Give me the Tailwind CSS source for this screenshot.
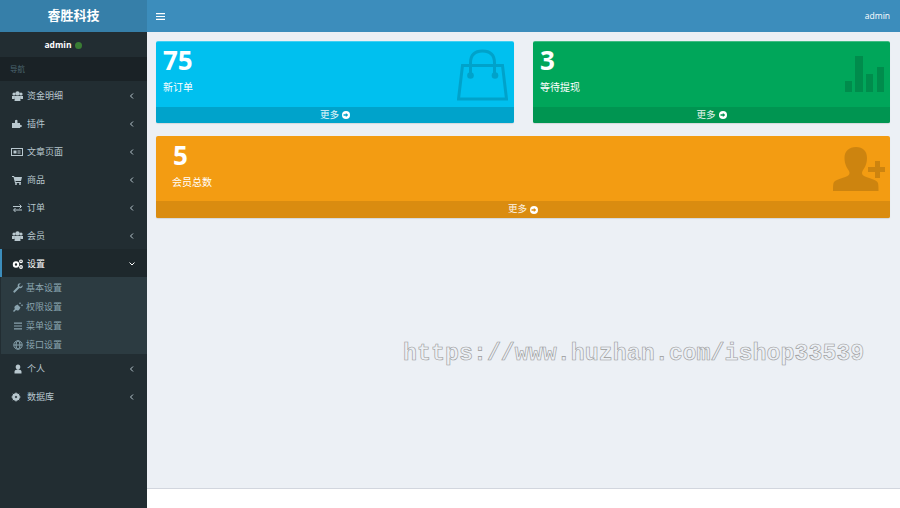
<!DOCTYPE html>
<html lang="zh">
<head>
<meta charset="utf-8">
<script src="https://cdn.jsdelivr.net/npm/@tailwindcss/browser@4"></script>
<title>admin</title>
</head>
<body class="h-[508px] w-[900px] overflow-hidden bg-white font-['Open_Sans','Noto_Sans_CJK_SC',sans-serif]">
<div class="flex h-[508px] w-[900px]">
  <aside class="flex w-[147px] shrink-0 flex-col bg-[#222d32]">
    <div class="flex h-8 items-center justify-center bg-[#367fa9] text-[13px] font-bold text-white">睿胜科技</div>
    <div class="flex h-[25px] items-center justify-center gap-[3px] pt-[2px] pr-[21px] text-[8.5px] font-bold text-white">
      <span>admin</span><span class="size-[7px] rounded-full bg-[#3a7d34]"></span>
    </div>
    <div class="flex h-6 items-center bg-[#1a2226] pl-[10px] pt-[2px] text-[7.5px] text-[#4b646f]">导航</div>
    <nav class="text-[9px] text-[#b8c7ce]">
      <div class="flex h-7 items-center pl-3 pr-[12px] pt-[2px]">
        <svg class="w-[11px] h-[10px] mr-1" viewBox="0 0 11 10" fill="currentColor"><circle cx="2" cy="3" r="1.6"/><circle cx="9" cy="3" r="1.6"/><circle cx="5.5" cy="2.4" r="2.2"/><path d="M0 5h3l-.5 3H0zM11 5H8l.5 3H11zM3 5h5l.5 5h-6z"/></svg>
        <span class="flex-1">资金明细</span>
        <svg class="size-[6px]" viewBox="0 0 6 6" fill="none" stroke="currentColor" stroke-width="1"><path d="M4 .5 1.500 3 4 5.500"/></svg>
      </div>
      <div class="flex h-7 items-center pl-3 pr-[12px] pt-[2px]">
        <svg class="w-[11px] h-[10px] mr-1" viewBox="0 0 11 10" fill="currentColor"><path d="M0 4h3V2.500a1.300 1.300 0 1 1 2.500 0V4H8v2a1.200 1.200 0 1 1 0 2v1H0z"/></svg>
        <span class="flex-1">插件</span>
        <svg class="size-[6px]" viewBox="0 0 6 6" fill="none" stroke="currentColor" stroke-width="1"><path d="M4 .5 1.500 3 4 5.500"/></svg>
      </div>
      <div class="flex h-7 items-center pl-[11px] pr-[12px] pt-[2px]">
        <svg class="w-[12px] h-[10px] mr-1" viewBox="0 0 12 10"><rect x=".5" y="1.500" width="11" height="7" fill="none" stroke="currentColor"/><rect x="2.500" y="3.500" width="3" height="3" fill="currentColor"/><path d="M6.500 4h3M6.500 6h3" stroke="currentColor"/></svg>
        <span class="flex-1">文章页面</span>
        <svg class="size-[6px]" viewBox="0 0 6 6" fill="none" stroke="currentColor" stroke-width="1"><path d="M4 .5 1.500 3 4 5.500"/></svg>
      </div>
      <div class="flex h-7 items-center pl-[12px] pr-[12px] pt-[2px]">
        <svg class="w-[11px] h-[10px] mr-1" viewBox="0 0 11 10" fill="currentColor"><path d="M0 1h2l.5 1H10L9 6H3.500l.2 1H9v1H3L1.500 2H0z"/><circle cx="4" cy="9" r="1"/><circle cx="8" cy="9" r="1"/></svg>
        <span class="flex-1">商品</span>
        <svg class="size-[6px]" viewBox="0 0 6 6" fill="none" stroke="currentColor" stroke-width="1"><path d="M4 .5 1.500 3 4 5.500"/></svg>
      </div>
      <div class="flex h-7 items-center pl-[12px] pr-[12px] pt-[2px]">
        <svg class="w-[11px] h-[10px] mr-1" viewBox="0 0 11 10" fill="none" stroke="currentColor"><path d="M1 3.500h8M7.500 1.500l2 2-2 2M10 7H2M3.500 5l-2 2 2 2"/></svg>
        <span class="flex-1">订单</span>
        <svg class="size-[6px]" viewBox="0 0 6 6" fill="none" stroke="currentColor" stroke-width="1"><path d="M4 .5 1.500 3 4 5.500"/></svg>
      </div>
      <div class="flex h-7 items-center pl-3 pr-[12px] pt-[2px]">
        <svg class="w-[11px] h-[10px] mr-1" viewBox="0 0 11 10" fill="currentColor"><circle cx="2" cy="3" r="1.6"/><circle cx="9" cy="3" r="1.6"/><circle cx="5.5" cy="2.4" r="2.2"/><path d="M0 5h3l-.5 3H0zM11 5H8l.5 3H11zM3 5h5l.5 5h-6z"/></svg>
        <span class="flex-1">会员</span>
        <svg class="size-[6px]" viewBox="0 0 6 6" fill="none" stroke="currentColor" stroke-width="1"><path d="M4 .5 1.500 3 4 5.500"/></svg>
      </div>
      <div class="flex h-7 items-center border-l-2 border-[#3c8dbc] bg-[#1e282c] pl-[10px] pr-[12px] pt-[2px] text-white">
        <svg class="w-[11px] h-[10px] mr-1" viewBox="0 0 11 10" fill="none" stroke="currentColor"><circle cx="4" cy="5.500" r="2.200" stroke-width="2"/><circle cx="9" cy="2.300" r="1.300" stroke-width="1.200"/><circle cx="9" cy="8" r="1.300" stroke-width="1.200"/></svg>
        <span class="flex-1">设置</span>
        <svg class="size-[6px]" viewBox="0 0 6 6" fill="none" stroke="currentColor" stroke-width="1"><path d="M.5 1.500 3 4l2.500-2.500"/></svg>
      </div>
      <div class="ml-px h-[77px] bg-[#2c3b41] text-[#8aa4af]">
        <div class="flex h-[19px] items-center pl-3 pt-[2px]">
          <svg class="size-[10px] mr-[3px]" viewBox="0 0 10 10" fill="currentColor"><path d="M9.500 2.200 7.800 3.800 6.400 3.500 6.100 2.100 7.800.5C6.300 0 4.700.9 4.700 2.500c0 .4 0 .7.200 1L.5 8a1 1 0 0 0 1.400 1.400L6.400 5c1.800.8 3.900-.9 3.100-2.800z"/></svg>
          <span>基本设置</span>
        </div>
        <div class="flex h-[19px] items-center pl-3 pt-[2px]">
          <svg class="size-[10px] mr-[3px]" viewBox="0 0 10 10" fill="currentColor"><path d="M4.500 2.500 7.500 5.500 6 8c-1 .8-2.200.7-3 .1L1 10 0 9l1.900-2c-.6-.8-.7-2 .1-3zM6 1.300 7 .3l1 1-1 1zM8 3.300l1-1 1 1-1 1z"/></svg>
          <span>权限设置</span>
        </div>
        <div class="flex h-[19px] items-center pl-3 pt-[2px]">
          <svg class="size-[10px] mr-[3px]" viewBox="0 0 10 10" fill="currentColor"><path d="M1 1.500h8v1.200H1zM1 4.400h8v1.200H1zM1 7.300h8v1.200H1z"/></svg>
          <span>菜单设置</span>
        </div>
        <div class="flex h-[19px] items-center pl-3 pt-[2px]">
          <svg class="size-[10px] mr-[3px]" viewBox="0 0 10 10" fill="none" stroke="currentColor"><circle cx="5" cy="5" r="4.200"/><ellipse cx="5" cy="5" rx="2" ry="4.200"/><path d="M1 5h8"/></svg>
          <span>接口设置</span>
        </div>
      </div>
      <div class="flex h-7 items-center pl-[13px] pr-[12px] pt-[2px]">
        <svg class="w-[10px] h-[10px] mr-1" viewBox="0 0 10 10" fill="currentColor"><path d="M5 .5c1.500 0 2.300 1 2.300 2.500S6.500 5.500 5 5.500 2.700 4.500 2.700 3 3.500.5 5 .5zM1.500 9.500V7.500C1.500 6.200 3 5.500 5 5.500s3.500.7 3.500 2v2z"/></svg>
        <span class="flex-1">个人</span>
        <svg class="size-[6px]" viewBox="0 0 6 6" fill="none" stroke="currentColor" stroke-width="1"><path d="M4 .5 1.500 3 4 5.500"/></svg>
      </div>
      <div class="flex h-7 items-center pl-[11px] pr-[12px] pt-[2px]">
        <svg class="w-[10px] h-[10px] mr-[6px]" viewBox="0 0 10 10" fill="none" stroke="currentColor"><circle cx="5" cy="5" r="2.500" stroke-width="2.500"/><path d="M5 .5v9M.5 5h9M1.800 1.800l6.400 6.400M8.200 1.800 1.800 8.200" stroke-width="1"/><circle cx="5" cy="5" r="1" fill="#222d32" stroke="none"/></svg>
        <span class="flex-1">数据库</span>
        <svg class="size-[6px]" viewBox="0 0 6 6" fill="none" stroke="currentColor" stroke-width="1"><path d="M4 .5 1.500 3 4 5.500"/></svg>
      </div>
    </nav>
  </aside>
  <div class="flex min-w-0 flex-1 flex-col">
    <header class="flex h-8 shrink-0 items-center justify-between bg-[#3c8dbc] pl-[9px] pr-[10px] text-[8.5px] text-white">
      <svg class="w-[9px] h-[7px]" viewBox="0 0 9 7" fill="#fff"><path d="M0 0h9v1.200H0zM0 2.900h9v1.200H0zM0 5.800h9V7H0z"/></svg>
      <span>admin</span>
    </header>
    <main class="relative flex-1 bg-[#ecf0f5] pl-[9px] pr-[10px] pt-[9px]">
      <div class="grid grid-cols-[358px_357px] gap-x-[19px] gap-y-[13px]">
        <section class="relative h-[82px] overflow-hidden rounded-[2px] border-t border-white/25 bg-[#00c0ef] bg-clip-border text-white shadow-[0_1px_1px_rgba(0,0,0,0.1)]">
          <div class="h-[65px] pl-[7px] pt-0">
            <div class="text-[26px] font-bold leading-9">75</div>
            <div class="mt-[2px] text-[10px] leading-[14px]">新订单</div>
          </div>
          <svg class="absolute left-[301px] top-[7px] opacity-15" width="51" height="52" viewBox="0 0 51 52">
            <path d="M5.500 16.500h40l4 33.500h-48z" fill="none" stroke="#000" stroke-width="3"/>
            <path d="M13.500 26V14C13.500 6 18 2 25.500 2s12 4 12 12v12" fill="none" stroke="#000" stroke-width="3"/>
            <circle cx="13.500" cy="26.500" r="3.300"/><circle cx="38" cy="26.500" r="3.300"/>
          </svg>
          <div class="flex h-4 items-center justify-center gap-[3px] bg-[#00a3cb] text-[9.500px] text-white/90">
            <span>更多</span>
            <svg class="size-2" viewBox="0 0 8 8"><circle cx="4" cy="4" r="4" fill="#fff"/><path d="M1.500 3.300h2.300V1.900L6.300 4 3.800 6.100V4.700H1.500z" fill="#00a3cb"/></svg>
          </div>
        </section>
        <section class="relative h-[82px] overflow-hidden rounded-[2px] border-t border-white/25 bg-[#00a65a] text-white shadow-[0_1px_1px_rgba(0,0,0,0.1)]">
          <div class="h-[65px] pl-[7px] pt-0">
            <div class="text-[26px] font-bold leading-9">3</div>
            <div class="mt-[2px] text-[10px] leading-[14px]">等待提现</div>
          </div>
          <svg class="absolute left-[312px] top-[14px] opacity-15" width="39" height="36" viewBox="0 0 39 36">
            <path d="M0 25h7v11H0zM10 0h8v36h-8zM21 18h7v18h-7zM32 11h7v25h-7z"/>
          </svg>
          <div class="flex h-4 items-center justify-center gap-[3px] bg-[#009551] text-[9.500px] text-white/90">
            <span>更多</span>
            <svg class="size-2" viewBox="0 0 8 8"><circle cx="4" cy="4" r="4" fill="#fff"/><path d="M1.500 3.300h2.300V1.900L6.300 4 3.800 6.100V4.700H1.500z" fill="#009551"/></svg>
          </div>
        </section>
        <section class="relative col-span-2 h-[82px] overflow-hidden rounded-[2px] bg-[#f39c12] text-white shadow-[0_1px_1px_rgba(0,0,0,0.1)]">
          <div class="h-[65px] pl-[16px] pt-[1px]">
            <div class="pl-px text-[26px] font-bold leading-9">5</div>
            <div class="mt-[2px] text-[10px] leading-[14px]">会员总数</div>
          </div>
          <svg class="absolute left-[677px] top-[11px] opacity-15" width="52" height="44" viewBox="0 0 52 44">
            <path d="M23 0c7 0 11 4 11 11 0 6-2.500 10-4.500 13-1 2-.5 4 1.500 5 6 2.500 12.500 3.500 14 7 .5 2 .5 5 .5 8H0c0-3 0-6 .5-8 1.500-3.500 8-4.500 14-7 2-1 2.500-3 1.500-5-2-3-4.500-7-4.500-13C11.500 4 16 0 23 0z"/>
            <path d="M42 14h5v6h5v5h-5v6h-5v-6h-7v-5h7z"/>
          </svg>
          <div class="flex h-[17px] items-center justify-center gap-[3px] bg-[#da8c10] text-[9.500px] text-white/90">
            <span>更多</span>
            <svg class="size-2" viewBox="0 0 8 8"><circle cx="4" cy="4" r="4" fill="#fff"/><path d="M1.500 3.300h2.300V1.900L6.300 4 3.800 6.100V4.700H1.500z" fill="#da8c10"/></svg>
          </div>
        </section>
      </div>
      <div class="absolute left-[256px] top-[304px] whitespace-nowrap font-['Liberation_Mono',monospace] text-[23.3px] font-bold leading-9 text-[#ecf0f5] [-webkit-text-stroke:0.6px_#9a9a9a]">https://www.huzhan.com/ishop33539</div>
    </main>
    <footer class="h-5 shrink-0 border-t border-[#d2d6de] bg-white"></footer>
  </div>
</div>
</body>
</html>
